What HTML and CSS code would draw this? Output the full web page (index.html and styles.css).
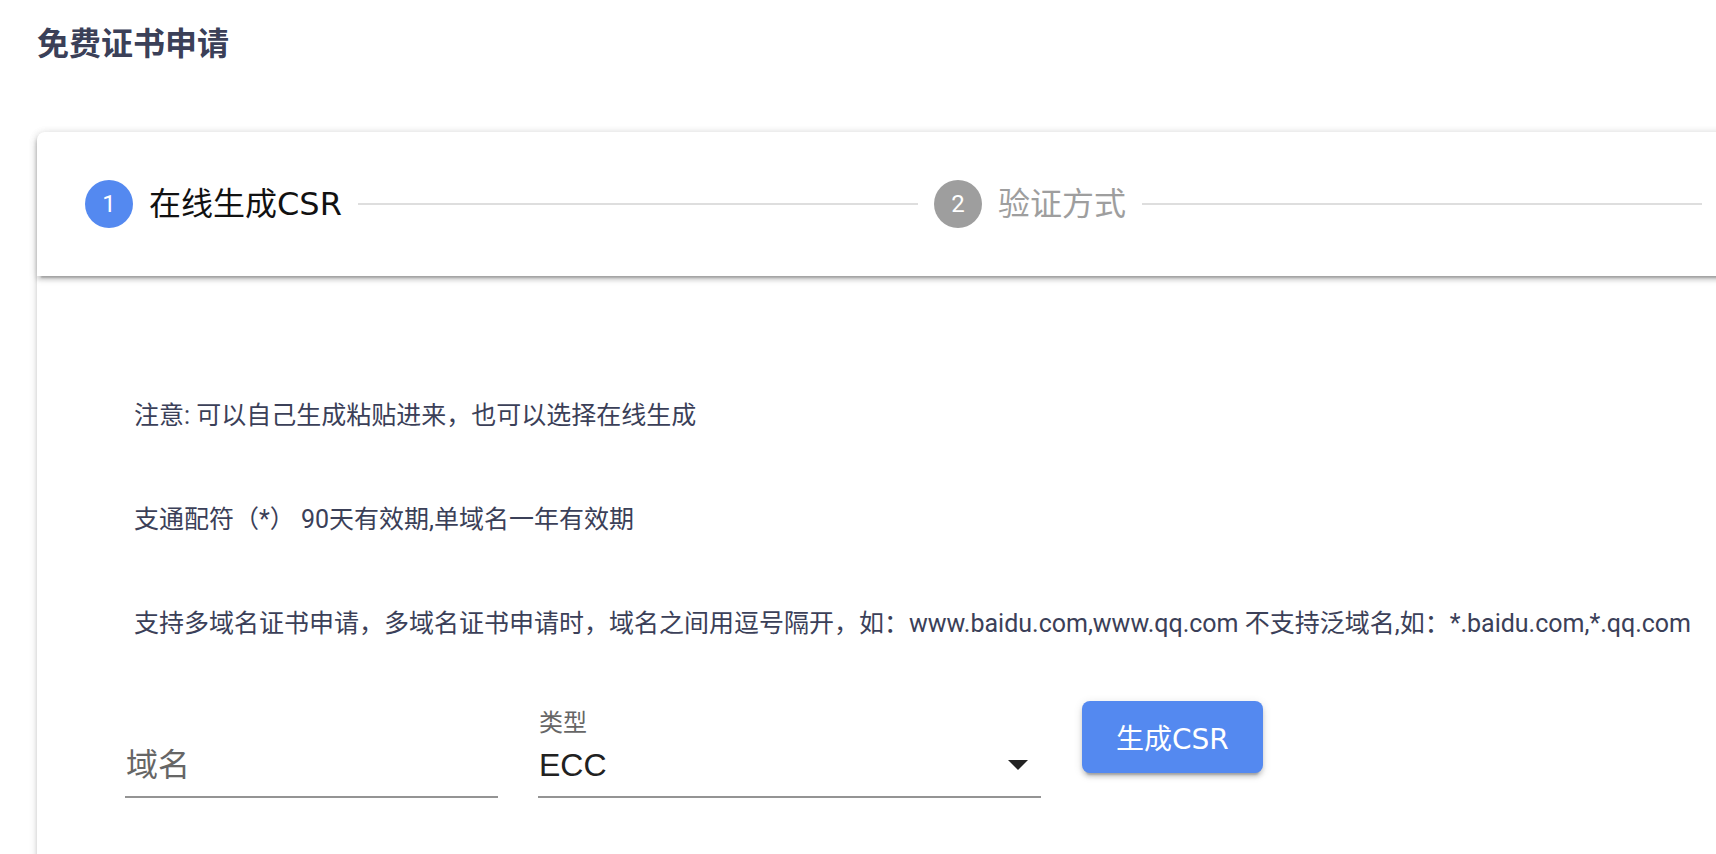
FILE: index.html
```html
<!DOCTYPE html>
<html lang="zh-CN">
<head>
<meta charset="utf-8">
<title>免费证书申请</title>
<link rel="stylesheet" href="styles.css">
</head>
<body>
<div class="page">
  <h1 class="title">免费证书申请</h1>
  <div class="card">
    <div class="stepper-header">
      <div class="step active">
        <span class="step-num">1</span>
        <span class="step-label">在线生成CSR</span>
      </div>
      <div class="divider"></div>
      <div class="step">
        <span class="step-num">2</span>
        <span class="step-label">验证方式</span>
      </div>
      <div class="divider last"></div>
    </div>
    <div class="content">
      <div class="notes">
        <p class="note">注意: 可以自己生成粘贴进来，也可以选择在线生成</p>
        <p class="note">支通配符（*） 90天有效期,单域名一年有效期</p>
        <p class="note">支持多域名证书申请，多域名证书申请时，域名之间用逗号隔开，如：www.baidu.com,www.qq.com 不支持泛域名,如：*.baidu.com,*.qq.com</p>
      </div>
      <div class="form-row">
        <div class="field field-text">
          <span class="field-label"></span>
          <div class="field-value"><span class="placeholder">域名</span></div>
        </div>
        <div class="field field-select">
          <span class="field-label">类型</span>
          <div class="field-value"><span class="value">ECC</span><span class="arrow"></span></div>
        </div>
        <button class="btn" type="button">生成CSR</button>
      </div>
    </div>
  </div>
</div>
</body>
</html>
```
FILE: styles.css
```css
html, body {
  margin: 0;
  padding: 0;
}
body {
  background: #ffffff;
  overflow: hidden;
  font-family: Roboto, "Noto Sans CJK SC", sans-serif;
}
.page {
  padding: 17px 0 0 37px;
}
.title {
  margin: 0;
  font-family: "Noto Sans CJK SC", sans-serif;
  font-size: 32px;
  line-height: 48px;
  font-weight: 700;
  color: #3b4058;
}
.card {
  margin-top: 67px;
  width: 1703px;
  min-height: 800px;
  background: #ffffff;
  border-radius: 8px 8px 0 0;
  box-shadow: 0 6px 2px -4px rgba(0,0,0,.2), 0 4px 4px 0 rgba(0,0,0,.14), 0 2px 10px 0 rgba(0,0,0,.12);
}
.stepper-header {
  display: flex;
  align-items: center;
  height: 144px;
  border-radius: 8px 8px 0 0;
  box-shadow: 0 6px 2px -4px rgba(0,0,0,.2), 0 4px 4px 0 rgba(0,0,0,.14), 0 2px 10px 0 rgba(0,0,0,.12);
}
.step {
  display: flex;
  align-items: center;
  padding: 0 48px;
  flex: none;
}
.step-num {
  flex: none;
  width: 48px;
  height: 48px;
  border-radius: 50%;
  background: #9e9e9e;
  color: #ffffff;
  font-family: Roboto, sans-serif;
  font-size: 24px;
  display: flex;
  align-items: center;
  justify-content: center;
  margin-right: 16px;
}
.step.active .step-num {
  background: #5489f0;
}
.step-label {
  font-family: "DejaVu Sans", "Noto Sans CJK SC", sans-serif;
  font-size: 32px;
  line-height: 40px;
  color: #9e9e9e;
  white-space: nowrap;
}
.step.active .step-label {
  color: #111111;
}
.divider {
  flex: 1 1 0;
  height: 0;
  border-top: 2px solid #dedede;
  margin: 0 -32px;
}
.divider.last {
  margin-right: 38px;
}
.content {
  padding: 122px 48px 40px 88px;
}
.notes {
  display: flex;
  flex-direction: column;
  gap: 68px;
  padding-left: 9px;
  margin-bottom: 59px;
}
.note {
  margin: 0;
  font-size: 25px;
  line-height: 36px;
  color: #3b4058;
  white-space: nowrap;
}
.form-row {
  display: flex;
  align-items: flex-start;
  gap: 40px;
}
.field {
  display: flex;
  flex-direction: column;
  padding: 8px 0 11px;
  border-bottom: 2px solid #949494;
}
.field-text {
  width: 373px;
}
.field-select {
  width: 503px;
}
.field-label {
  height: 28px;
  font-size: 24px;
  line-height: 28px;
  color: #666666;
  padding-left: 1px;
}
.field-value {
  margin-top: 8px;
  height: 40px;
  display: flex;
  align-items: center;
  font-size: 32px;
  line-height: 40px;
  color: #212121;
  padding-left: 1px;
}
.value {
  font-family: "Liberation Sans", sans-serif;
}
.placeholder {
  color: #666666;
}
.arrow {
  margin-left: auto;
  margin-right: 13px;
  width: 0;
  height: 0;
  border-left: 10px solid transparent;
  border-right: 10px solid transparent;
  border-top: 10px solid #222222;
}
.btn {
  margin-left: 1px;
  height: 72px;
  padding: 0 34px;
  border: none;
  border-radius: 8px;
  background: #5489f0;
  color: #ffffff;
  font-family: "DejaVu Sans", "Noto Sans CJK SC", sans-serif;
  font-size: 28px;
  box-shadow: 0 6px 2px -4px rgba(0,0,0,.2), 0 4px 4px 0 rgba(0,0,0,.14), 0 2px 10px 0 rgba(0,0,0,.12);
  cursor: pointer;
}
```
